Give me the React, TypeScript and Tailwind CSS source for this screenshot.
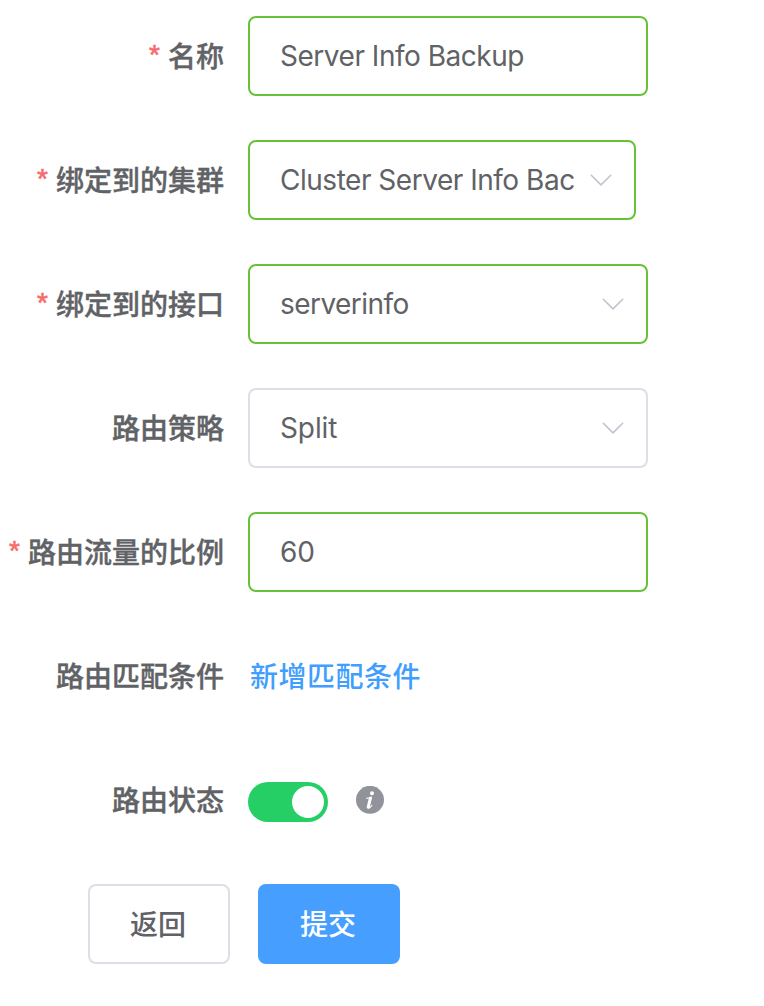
import React, { useState } from 'react';

function Chevron() {
  return (
    <svg className="h-7 w-7 shrink-0" viewBox="0 0 28 28" fill="none" stroke="#c0c4cc" strokeWidth="1.600" strokeLinecap="round" strokeLinejoin="round">
      <path d="M4.300 9.300 14 18.900l9.700-9.600" />
    </svg>
  );
}

function InfoIcon() {
  return (
    <svg className="ml-7 h-7 w-7" viewBox="0 0 28 28" fill="none">
      <circle cx="14" cy="13.800" r="14" fill="#909399" />
      <circle cx="16" cy="7.200" r="2" fill="#fff" />
      <path d="M10.500 12.300c1.700-.2 3.300-.6 4.800-1.100l-2.500 9.400c-.3 1.300.1 1.700.8 1.200.8-.5 1.500-1.400 2.300-2.500" stroke="#fff" strokeWidth="1.100" strokeLinecap="round" />
      <path d="M14.400 12.200 12.200 21.200" stroke="#fff" strokeWidth="3" strokeLinecap="round" />
    </svg>
  );
}

function Row({ label, required, children }: { label: string; required?: boolean; children: React.ReactNode }) {
  return (
    <div className="mb-11 flex h-20 items-center">
      <div className="flex w-56 shrink-0 justify-end pt-0.5 text-[28px] leading-[80px] font-medium whitespace-nowrap">
        {required && <span className="-mt-0.5 mr-2 font-['Liberation_Sans',sans-serif] text-[#f56c6c] [-webkit-text-stroke:0.6px_#f56c6c]">*</span>}
        <span className="[-webkit-text-stroke:0.4px_#606266]">{label}</span>
      </div>
      <div className="ml-6 flex items-center">{children}</div>
    </div>
  );
}

function Field({ value, select, className }: { value: string; select?: boolean; className: string }) {
  return (
    <div className={'flex h-20 items-center rounded-lg border-2 bg-white pr-[19px] pl-[30px] text-[28px] ' + className}>
      <span className="mr-3 flex-1 overflow-hidden whitespace-nowrap">{value}</span>
      {select && <Chevron />}
    </div>
  );
}

export default function App() {
  const [on, setOn] = useState(true);
  return (
    <main className="min-h-[1006px] w-[764px] bg-white pt-4 font-['Inter','Noto_Sans_CJK_SC',sans-serif] text-[#606266]">
      <Row label="名称" required><Field value="Server Info Backup" className="w-[400px] border-[#67c23a] tracking-[-0.48px]" /></Row>
      <Row label="绑定到的集群" required><Field value="Cluster Server Info Backup" select className="w-[388px] border-[#67c23a] tracking-[-0.48px]" /></Row>
      <Row label="绑定到的接口" required><Field value="serverinfo" select className="w-[400px] border-[#67c23a] tracking-[-0.55px]" /></Row>
      <Row label="路由策略"><Field value="Split" select className="w-[400px] border-[#dcdfe6] tracking-[-0.1px]" /></Row>
      <Row label="路由流量的比例" required><Field value="60" className="w-[400px] border-[#67c23a]" /></Row>
      <Row label="路由匹配条件"><button className="ml-0.5 pt-0.5 text-[28px] font-medium tracking-[0.5px] text-[#409eff]">新增匹配条件</button></Row>
      <Row label="路由状态">
        <button aria-pressed={on} onClick={() => setOn(!on)} className={'mt-1 flex h-10 w-20 items-center rounded-full px-1 ' + (on ? 'justify-end bg-[#26ce66]' : 'justify-start bg-[#dcdfe6]')}>
          <span className="h-8 w-8 rounded-full bg-white" />
        </button>
        <InfoIcon />
      </Row>
      <div className="flex gap-7 pl-[88px] text-[28px] font-medium">
        <button className="h-20 w-[142px] rounded-lg border-2 border-[#dcdfe6] bg-white pt-0.5 pr-0.5">返回</button>
        <button className="h-20 w-[142px] rounded-lg bg-[#469fff] pt-0.5 pr-0.5 text-white">提交</button>
      </div>
    </main>
  );
}
